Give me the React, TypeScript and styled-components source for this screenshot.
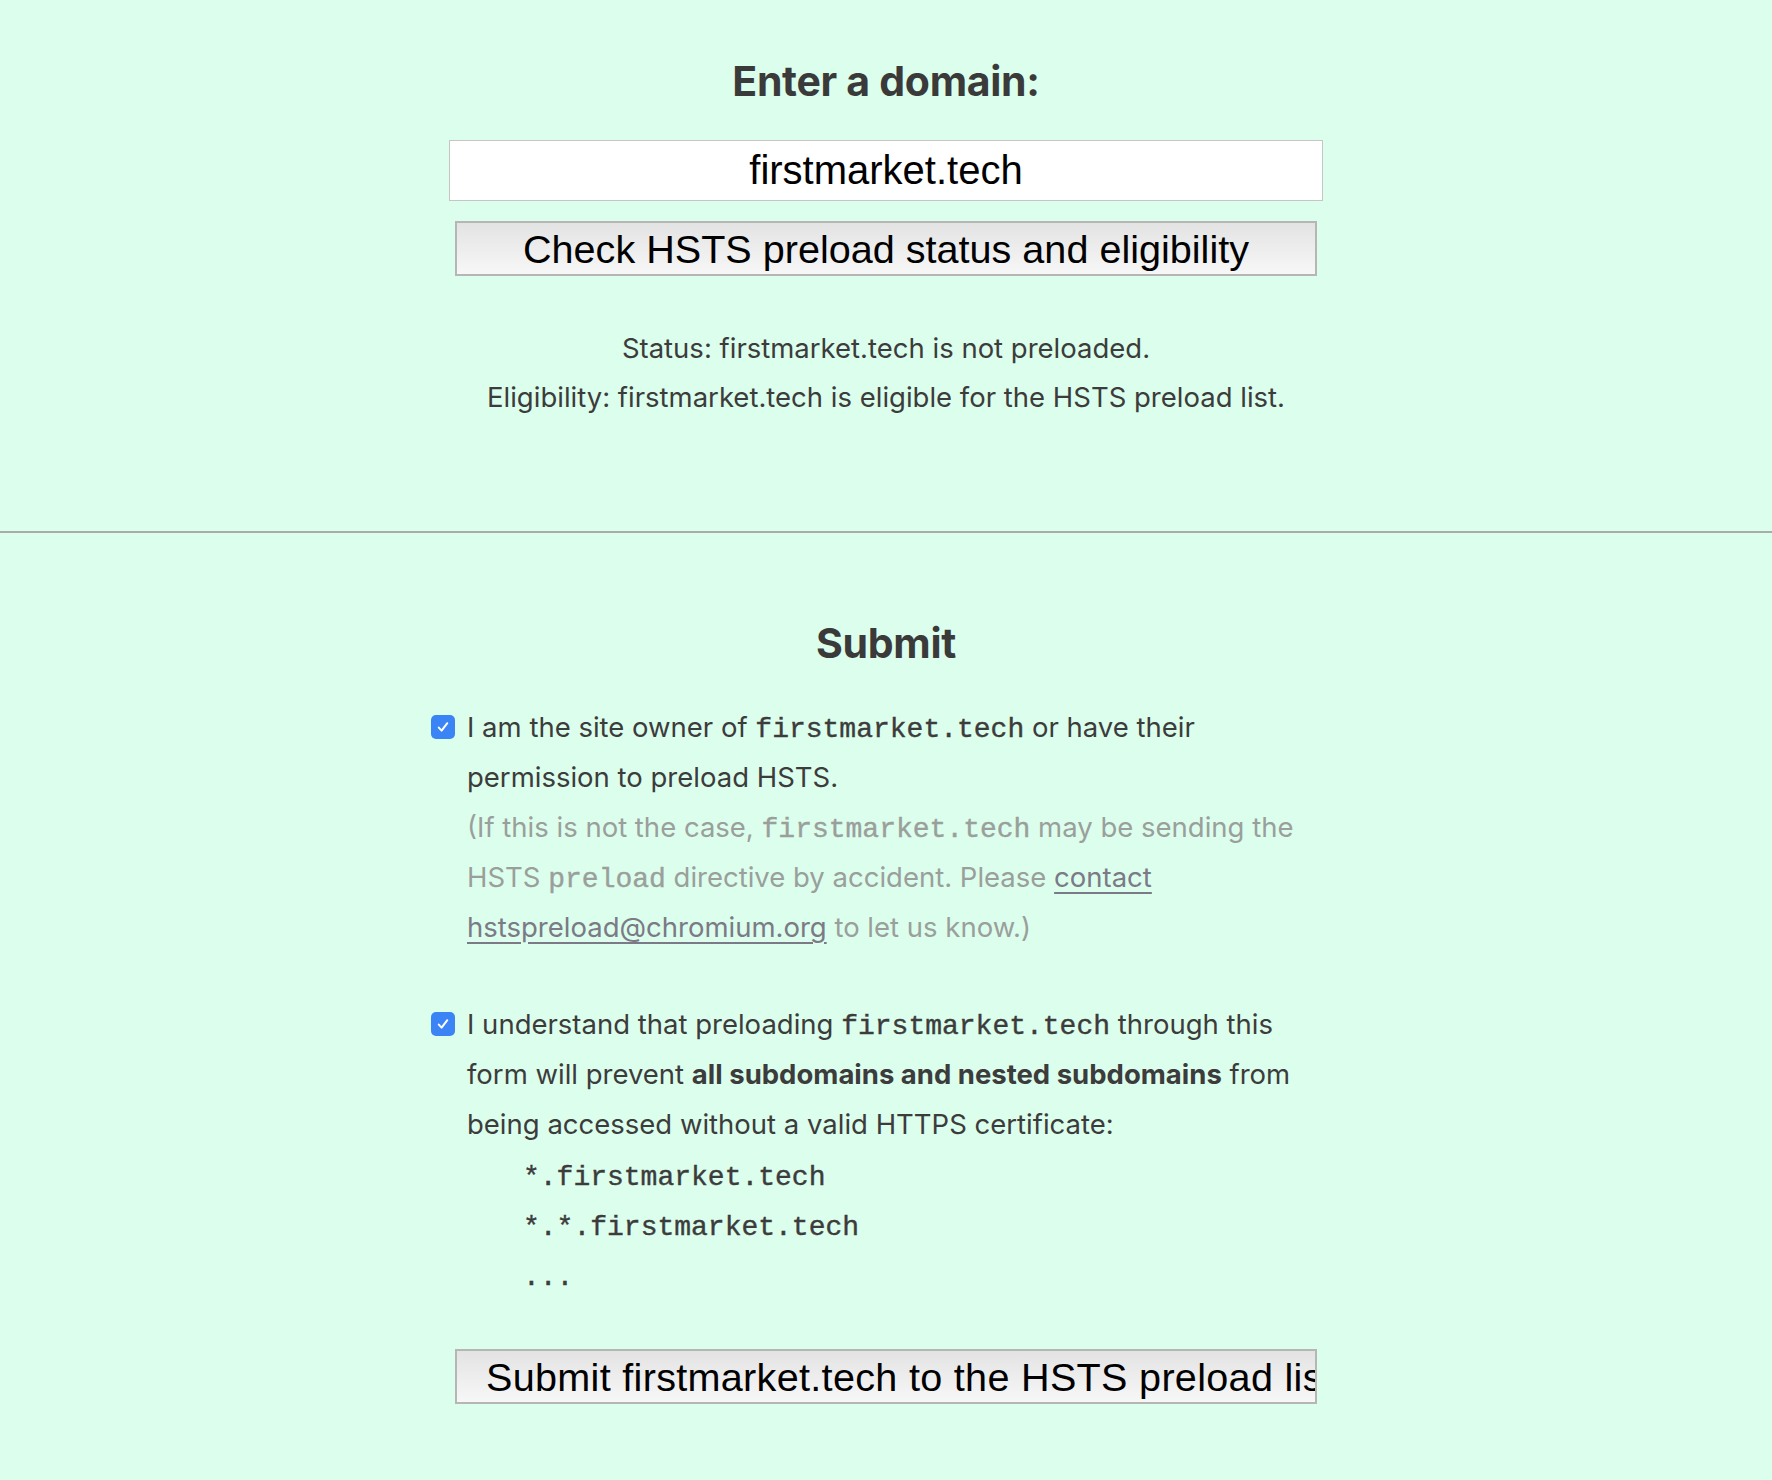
import React from "react";
import styled, { createGlobalStyle } from "styled-components";

const GlobalStyle = createGlobalStyle`
  html, body {
    margin: 0;
    padding: 0;
    background: #dcfeec;
  }
  body {
    font-family: Inter, "Noto Sans", sans-serif;
    color: #3c3c3c;
  }
`;

const Page = styled.div`
  min-height: 1480px;
  background: #dcfeec;
  display: flex;
  flex-direction: column;
`;

const Section = styled.section<{ $top: number; $bottom: number }>`
  display: flex;
  flex-direction: column;
  align-items: center;
  padding-top: ${(p) => p.$top}px;
  padding-bottom: ${(p) => p.$bottom}px;
`;

const Heading = styled.h2<{ $gap: number }>`
  margin: 0 0 ${(p) => p.$gap}px;
  font-family: Inter, "Noto Sans", sans-serif;
  font-weight: 700;
  font-size: 41px;
  line-height: 46px;
  color: #3a3a3a;
  letter-spacing: -0.3px;
`;

const DomainInput = styled.input`
  box-sizing: border-box;
  width: 874px;
  height: 61px;
  margin: 0;
  padding: 0 12px;
  border: 1px solid #c6c6c6;
  background: #ffffff;
  font-family: "Liberation Sans", Arial, sans-serif;
  font-size: 40px;
  color: #000;
  text-align: center;
  outline: none;
`;

const ActionButton = styled.button<{ $gap: number; $spacing?: number }>`
  display: block;
  box-sizing: border-box;
  width: 862px;
  height: 55px;
  margin: ${(p) => p.$gap}px 0 0;
  padding: 0 29px;
  border: 2px solid #b6b6b6;
  border-radius: 0;
  background: linear-gradient(to bottom, #e3e3e3, #f7f7f7);
  font-family: "Liberation Sans", Arial, sans-serif;
  font-size: 39.6px;
  letter-spacing: ${(p) => p.$spacing ?? 0}px;
  line-height: 50px;
  color: #000;
  text-align: center;
  white-space: nowrap;
  overflow: hidden;
  cursor: pointer;
`;

const StatusBlock = styled.div`
  margin-top: 48px;
  display: flex;
  flex-direction: column;
  align-items: center;
`;

const StatusLine = styled.div`
  font-size: 27.5px;
  line-height: 49px;
  color: #3c3c3c;
`;

const Divider = styled.hr`
  width: 100%;
  margin: 0;
  border: 0;
  height: 2px;
  background: #a9aca9;
`;

const Checklist = styled.div`
  width: 910px;
  display: flex;
  flex-direction: column;
  gap: 47px;
`;

const CheckItem = styled.label`
  display: flex;
  align-items: flex-start;
  gap: 12px;
`;

const Box = styled.span`
  flex: none;
  width: 24px;
  height: 24px;
  margin-top: 13px;
  border-radius: 5px;
  background: #3b84f6;
  display: flex;
  align-items: center;
  justify-content: center;
`;

const CheckText = styled.div`
  width: 850px;
  font-size: 27.5px;
  line-height: 50px;
  color: #3c3c3c;
`;

const Code = styled.code`
  font-family: "Liberation Mono", "Courier New", monospace;
  font-size: 28px;
  line-height: 1;
  font-weight: 400;
  -webkit-text-stroke: 0.4px currentColor;
  color: #3c3c3c;
`;

const Note = styled.div`
  color: #9a9f9c;
`;

const NoteCode = styled(Code)`
  color: #9a9f9c;
`;

const NoteLink = styled.a`
  color: #7b7a86;
  text-decoration: underline;
  text-decoration-thickness: 2px;
  text-underline-offset: 5px;
`;

const Strong = styled.strong`
  font-weight: 700;
`;

const PatternList = styled.div`
  padding: 4px 0 0 56px;
  display: flex;
  flex-direction: column;
`;

const Pattern = styled(Code)`
  display: block;
  line-height: 50px;
`;

const Check = () => (
  <Box>
    <svg width="16" height="16" viewBox="0 0 16 16" fill="none">
      <path
        d="M3.8 8.6 L6.6 11.6 L12.3 4.2"
        stroke="#fff"
        strokeWidth="2"
        strokeLinecap="round"
        strokeLinejoin="round"
      />
    </svg>
  </Box>
);

export default function App() {
  const domain = "firstmarket.tech";
  return (
    <Page>
      <GlobalStyle />
      <Section $top={58} $bottom={109}>
        <Heading $gap={36}>Enter a domain:</Heading>
        <DomainInput value={domain} readOnly />
        <ActionButton $gap={20}>Check HSTS preload status and eligibility</ActionButton>
        <StatusBlock>
          <StatusLine>Status: {domain} is not preloaded.</StatusLine>
          <StatusLine>Eligibility: {domain} is eligible for the HSTS preload list.</StatusLine>
        </StatusBlock>
      </Section>
      <Divider />
      <Section $top={87} $bottom={76}>
        <Heading $gap={36}>Submit</Heading>
        <Checklist>
          <CheckItem>
            <Check />
            <CheckText>
              I am the site owner of <Code>{domain}</Code> or have their permission to preload HSTS.
              <Note>
                (If this is not the case, <NoteCode>{domain}</NoteCode> may be sending the HSTS{" "}
                <NoteCode>preload</NoteCode> directive by accident. Please{" "}
                <NoteLink href="#">contact hstspreload@chromium.org</NoteLink> to let us know.)
              </Note>
            </CheckText>
          </CheckItem>
          <CheckItem>
            <Check />
            <CheckText>
              I understand that preloading <Code>{domain}</Code> through this form will prevent{" "}
              <Strong>all subdomains and nested subdomains</Strong> from being accessed without a
              valid HTTPS certificate:
              <PatternList>
                <Pattern>*.{domain}</Pattern>
                <Pattern>*.*.{domain}</Pattern>
                <Pattern>...</Pattern>
              </PatternList>
            </CheckText>
          </CheckItem>
        </Checklist>
        <ActionButton $gap={46} $spacing={0.3}>
          Submit {domain} to the HSTS preload list
        </ActionButton>
      </Section>
    </Page>
  );
}
